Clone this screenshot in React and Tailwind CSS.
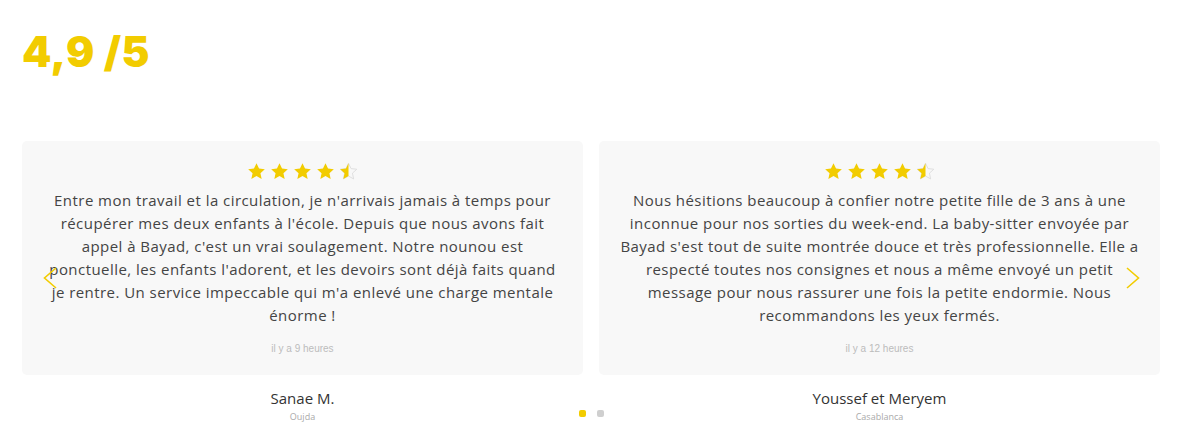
const reviews = [
  {
    text: "Entre mon travail et la circulation, je n'arrivais jamais à temps pour récupérer mes deux enfants à l'école. Depuis que nous avons fait appel à Bayad, c'est un vrai soulagement. Notre nounou est ponctuelle, les enfants l'adorent, et les devoirs sont déjà faits quand je rentre. Un service impeccable qui m'a enlevé une charge mentale énorme !",
    time: "il y a 9 heures",
    name: "Sanae M.",
    city: "Oujda",
  },
  {
    text: "Nous hésitions beaucoup à confier notre petite fille de 3 ans à une inconnue pour nos sorties du week-end. La baby-sitter envoyée par Bayad s'est tout de suite montrée douce et très professionnelle. Elle a respecté toutes nos consignes et nous a même envoyé un petit message pour nous rassurer une fois la petite endormie. Nous recommandons les yeux fermés.",
    time: "il y a 12 heures",
    name: "Youssef et Meryem",
    city: "Casablanca",
  },
];

const STAR =
  "M12 2.5l2.9 6.2 6.6.7-5 4.5 1.4 6.6L12 17.2l-5.9 3.3 1.4-6.6-5-4.5 6.6-.7z";

function Star({ half }) {
  return (
    <svg width="21" height="21" viewBox="0 0 24 24">
      {half ? (
        <>
          <defs>
            <clipPath id="half-left">
              <rect x="0" y="0" width="12" height="24" />
            </clipPath>
          </defs>
          <path d={STAR} fill="none" stroke="#dcdcdc" strokeWidth="1" />
          <path d={STAR} fill="#f2cc00" clipPath="url(#half-left)" />
        </>
      ) : (
        <path d={STAR} fill="#f2cc00" />
      )}
    </svg>
  );
}

function Stars() {
  return (
    <div className="flex justify-center gap-[2px]">
      <Star />
      <Star />
      <Star />
      <Star />
      <Star half />
    </div>
  );
}

// thin slider arrow, points left unless flipped
function Arrow({ flip, className }) {
  return (
    <svg
      width="14"
      height="22"
      viewBox="0 0 14 22"
      className={className}
      style={flip ? { transform: "scaleX(-1)" } : undefined}
    >
      <polyline
        points="13,1 1.5,11 13,21"
        fill="none"
        stroke="#f2cc00"
        strokeWidth="1.6"
      />
    </svg>
  );
}

function ReviewCard({ review }) {
  return (
    <div className="flex flex-col items-center">
      <div className="w-full h-[234px] bg-[#f8f8f8] rounded-[5px] flex flex-col items-center pt-[20px]">
        <Stars />
        <p className="mt-[7px] w-[521px] text-center text-[15px] leading-[23px] tracking-[0.45px] text-[#444] font-['Open_Sans',sans-serif]">
          {review.text}
        </p>
        <span className="mt-auto mb-[19px] text-[10px] text-[#bcbcbc] font-['Liberation_Sans',sans-serif]">
          {review.time}
        </span>
      </div>
      <div className="mt-[12px] text-[15px] text-[#333] font-['Open_Sans',sans-serif]">
        {review.name}
      </div>
      <div className="text-[9px] text-[#aaa] font-['Open_Sans',sans-serif]">
        {review.city}
      </div>
    </div>
  );
}

export default function App() {
  return (
    <div className="w-[1194px] h-[441px] bg-white pl-[22px] pr-[34px] overflow-hidden">
      <h1 className="pt-[24px] text-[42px] leading-[56px] font-black text-[#f2cc00] font-['Inter',sans-serif] tracking-[0.5px]">
        4,9 /5
      </h1>
      <div className="relative mt-[61px]">
        <div className="grid grid-cols-2 gap-[16px]">
          {reviews.map((r) => (
            <ReviewCard key={r.name} review={r} />
          ))}
        </div>
        <Arrow className="absolute left-[21px] top-[126px]" />
        <Arrow flip className="absolute right-[20px] top-[126px]" />
        <div className="absolute left-[557px] top-[269px] flex gap-[11px]">
          <span className="w-[7px] h-[7px] rounded-[2px] bg-[#f2cc00]" />
          <span className="w-[7px] h-[7px] rounded-[2px] bg-[#cfcfcf]" />
        </div>
      </div>
    </div>
  );
}
